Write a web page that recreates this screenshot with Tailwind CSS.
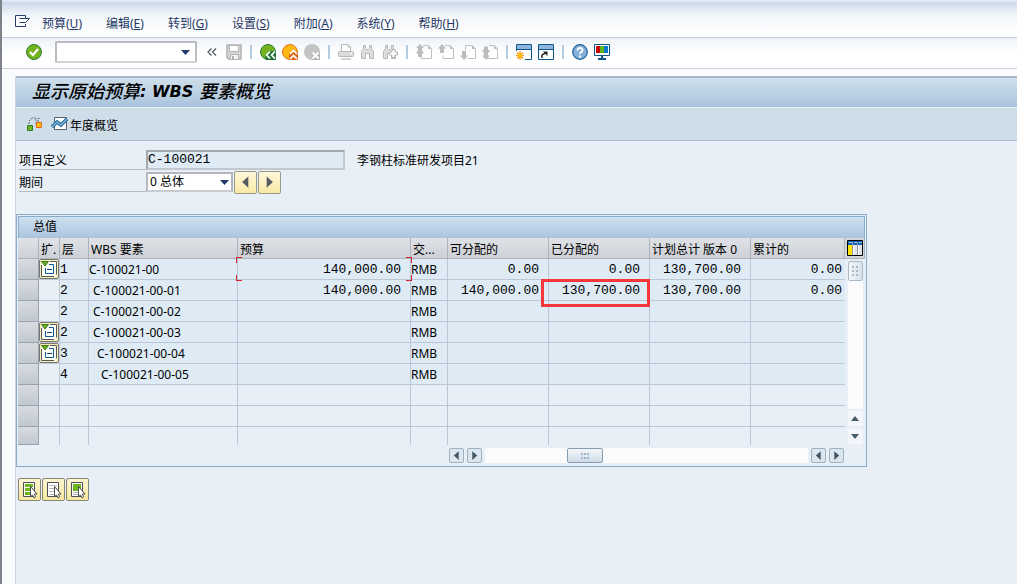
<!DOCTYPE html>
<html lang="zh-CN">
<head>
<meta charset="utf-8">
<meta name="viewport" content="width=device-width, initial-scale=1">
<title>显示原始预算: WBS 要素概览</title>
<script src="https://cdn.jsdelivr.net/npm/@tailwindcss/browser@4"></script>
</head>
<body class="min-h-screen flex flex-col bg-[#fafbfd] border-l-2 border-[#7d828b] font-['Noto_Sans','Noto_Sans_CJK_SC',sans-serif] text-xs text-black">

<svg width="0" height="0" class="absolute" aria-hidden="true">
  <defs>
    <symbol id="page" viewBox="0 0 16 16"><path d="M7 1.500h5l3.500 3.500v9.500H5V11" fill="none" stroke="#c0c0c0"/><path d="M12 1v4h4z" fill="#c0c0c0"/></symbol>
    <symbol id="tree" viewBox="0 0 18 18"><path d="M1.500 1.500h15v15h-15z" fill="#fffdf2"/><path d="M10 1.500h6.500v13M1.500 5v11.500H14" fill="none" stroke="#55585c"/><path d="M9 4.500h4.500v9h-8V8" fill="#fff" stroke="#0a5d94"/><path d="M7 9.500h5" stroke="#0a3d78"/><path d="M1.500 1.500h7L5 6z" fill="#6cae1e" stroke="#37751f"/></symbol>
    <symbol id="cursor" viewBox="0 0 18 18"><path d="M9.500 5.500v10l2-1.500 1.500 3 1.500-1-1-3h2.500z" fill="#fff" stroke="#4c5156"/></symbol>
    <symbol id="left" viewBox="0 0 8 10"><path d="M6.500 0v10L1 5z" fill="currentColor"/></symbol>
    <symbol id="right" viewBox="0 0 8 10"><path d="M1.500 0v10L7 5z" fill="currentColor"/></symbol>
    <symbol id="bino" viewBox="0 0 16 16"><path d="M3.500 1.500h2v3l1 1h2l1-1v-3h2v3l2 3v7h-4v-5h-4v5h-4v-7l2-3z" fill="#dedede" stroke="#b5b5b5"/></symbol>
  </defs>
</svg>

<header>
  <nav aria-label="菜单" class="h-[38px] pt-2 pl-[13px] flex items-center border-t-2 border-[#dfe8f5] border-b border-b-[#c9cdd6] bg-linear-to-b from-[#ccd8e9] via-[#f4f7fb] via-40% to-white text-[#1f3763]">
    <button aria-label="系统菜单" class="mr-3 mb-1.5"><svg width="15" height="12" viewBox="0 0 15 12" fill="none" stroke="#27406b"><path d="M10.500 3V.5H.5v11h10V9"/><path d="M4.500 3.500h10l-4 4h-6" fill="#fff"/></svg></button>
    <ul class="flex gap-6">
      <li><button>预算(<u>U</u>)</button></li>
      <li><button>编辑(<u>E</u>)</button></li>
      <li><button>转到(<u>G</u>)</button></li>
      <li><button>设置(<u>S</u>)</button></li>
      <li><button>附加(<u>A</u>)</button></li>
      <li><button>系统(<u>Y</u>)</button></li>
      <li><button>帮助(<u>H</u>)</button></li>
    </ul>
  </nav>

  <div role="toolbar" aria-label="标准工具栏" class="h-[31px] pl-6 pb-0.5 flex items-center gap-1.5 border-b border-[#cdd2df] bg-linear-to-b from-[#eef2f8] to-white to-50%">
    <button aria-label="输入"><svg width="16" height="16" viewBox="0 0 16 16"><circle cx="8" cy="8" r="7.500" fill="#72b31e" stroke="#2f7d38"/><path d="M4 8l3 3 5-6" fill="none" stroke="#fff" stroke-width="2.200"/></svg></button>
    <div class="ml-[7px] flex w-[142px] h-[22px] border-2 border-[#b9bcc1] border-b-[#cfd2d6] rounded-xs bg-white">
      <input aria-label="命令" class="min-w-0 flex-1 px-1 outline-none">
      <button aria-label="命令历史" class="w-5 flex items-center justify-center"><svg width="9" height="5" viewBox="0 0 9 5"><path d="M0 0h9L4.500 5z" fill="#213a6a"/></svg></button>
    </div>
    <button aria-label="收起" class="ml-1 mr-[3px]"><svg width="10" height="10" viewBox="0 0 10 10" fill="none" stroke="#555a60" stroke-width="1.300"><path d="M4.500 1.500L1 5l3.500 3.500M9 1.500L5.500 5 9 8.500"/></svg></button>
    <button aria-label="保存"><svg width="16" height="16" viewBox="0 0 16 16"><path d="M1 1h14v14H2.500L1 13.500z" fill="#d6d6d6" stroke="#b3b3b3" stroke-width="1.500"/><path d="M3.500 1.500h9v6h-9z" fill="#fff" stroke="#b3b3b3"/><path d="M4.500 10.500h8v5h-8z" fill="#f5f5f5" stroke="#b3b3b3"/><path d="M6 12h2v3H6z" fill="#b3b3b3"/></svg></button>
    <span class="w-0.5 h-3.5 mx-0.5 bg-[#b4cce2]"></span>
    <button aria-label="返回"><svg width="16" height="16" viewBox="0 0 16 16"><circle cx="8" cy="8" r="7.500" fill="#72b31e" stroke="#2f7d38"/><path d="M6 16l-1-4.500L9 7h7v9z" fill="#26743b"/><path d="M10 7.500L6.500 11l3.500 3.500M15 7.500L11.500 11l3.500 3.500" fill="none" stroke="#fff" stroke-width="1.700"/></svg></button>
    <button aria-label="退出"><svg width="16" height="16" viewBox="0 0 16 16"><circle cx="8" cy="8" r="7.500" fill="#fdb813" stroke="#e07020"/><path d="M7 16v-6l4.500-5L16 9v7z" fill="#e0661c"/><path d="M8 10l3.500-3.500L15 10M8 15l3.500-3.500L15 15" fill="none" stroke="#fff" stroke-width="1.700"/></svg></button>
    <button aria-label="取消"><svg width="16" height="16" viewBox="0 0 16 16"><circle cx="8" cy="8" r="8" fill="#c4c4c4"/><path d="M8 8h8v8H8z" fill="#b6b6b6"/><path d="M8.500 8.500l6 6m0-6l-6 6" stroke="#fff" stroke-width="2"/></svg></button>
    <span class="w-0.5 h-3.5 mx-0.5 bg-[#b4cce2]"></span>
    <button aria-label="打印"><svg width="16" height="16" viewBox="0 0 16 16"><path d="M3.500 7V.5H10l2.500 2.500v4" fill="#fff" stroke="#b8b8b8"/><path d="M10 .5V3h2.500" fill="none" stroke="#b8b8b8"/><rect x=".5" y="7.500" width="15" height="5" rx="1" fill="#dcdcdc" stroke="#b8b8b8"/><path d="M3 15h10" stroke="#c4c4c4" stroke-width="1.500"/><path d="M12 9.500h2" stroke="#fff"/></svg></button>
    <button aria-label="查找"><svg width="16" height="16"><use href="#bino"/></svg></button>
    <button aria-label="查找下一个"><svg width="16" height="16" viewBox="0 0 16 16"><use href="#bino" width="16" height="16"/><path d="M10 5.500h3V8h2.500v3H13v2.500h-3V11H7.500V8H10z" fill="#fff" stroke="#b5b5b5"/></svg></button>
    <span class="w-0.5 h-3.5 mx-0.5 bg-[#b4cce2]"></span>
    <button aria-label="第一页"><svg width="16" height="16" viewBox="0 0 16 16" fill="#bdbdbd"><use href="#page" width="16" height="16"/><path d="M4 0l4 4H6v2l2 3.500H6V13H2V9.500H0L2 6V4H0z"/></svg></button>
    <button aria-label="上一页"><svg width="16" height="16" viewBox="0 0 16 16" fill="#bdbdbd"><use href="#page" width="16" height="16"/><path d="M4 0l4 4.500H6V9H2V4.500H0z"/></svg></button>
    <button aria-label="下一页"><svg width="16" height="16" viewBox="0 0 16 16" fill="#bdbdbd"><path d="M5.500 6V1.500H12l3.500 3.500v9.500H8" fill="none" stroke="#c0c0c0"/><path d="M12 1v4h4zM4 16l4-4.500H6V7H2v4.500H0z"/></svg></button>
    <button aria-label="最后一页"><svg width="16" height="16" viewBox="0 0 16 16" fill="#bdbdbd"><use href="#page" width="16" height="16"/><path d="M4 16l4-4.500H6V9.500L8 6H6V2.500H2V6H0l2 3.500v2H0z"/></svg></button>
    <span class="w-0.5 h-3.5 mx-0.5 bg-[#b4cce2]"></span>
    <button aria-label="新建会话"><svg width="16" height="16" viewBox="0 0 16 16"><path d="M.5 7V.5h15v15H9" fill="#fff" stroke="#0c568c"/><path d="M1 1h14v4H1z" fill="#8fb5dc"/><path d="M0 5.500h16" stroke="#0c568c"/><path d="M4 7v9M0 11.500h8M1 8.500l6 6m0-6l-6 6" stroke="#f08a14" stroke-width="1.200"/><circle cx="4" cy="11.500" r="2.500" fill="#fdc010"/></svg></button>
    <button aria-label="创建快捷方式"><svg width="16" height="16" viewBox="0 0 16 16"><path d="M.5.5h15v15H.5z" fill="#fff" stroke="#0c568c"/><path d="M1 1h14v4H1z" fill="#8fb5dc"/><path d="M0 5.500h16" stroke="#0c568c"/><path d="M4 14c-.5-3 0-4 3-4.500" fill="none" stroke="#222" stroke-width="1.500"/><path d="M5 7.500h4.500V12z" fill="#222"/></svg></button>
    <span class="w-0.5 h-3.5 mx-0.5 bg-[#b4cce2]"></span>
    <button aria-label="帮助"><svg width="16" height="16" viewBox="0 0 16 16"><circle cx="8" cy="8" r="7.300" fill="#86b0d8" stroke="#1c669c" stroke-width="1.200"/><path d="M5.500 6.500c0-3.500 5-3.200 5-.5 0 2-2.500 2-2.500 4" fill="none" stroke="#fff" stroke-width="1.800"/><path d="M7 11.500h2v2H7z" fill="#fff"/></svg></button>
    <button aria-label="本地布局"><svg width="16" height="16" viewBox="0 0 16 16"><path d="M.5.5h15v11H.5z" fill="#fff" stroke="#0c568c"/><path d="M2 2h4v7H2z" fill="#c40808"/><path d="M6 2h4v7H6z" fill="#5cb31e"/><path d="M10 2h4v7h-4z" fill="#0878c8"/><path d="M8 12v3M4 15h8" stroke="#0c568c" stroke-width="2"/></svg></button>
  </div>
</header>

<main class="mt-[7px] ml-[13px] flex-1 flex flex-col bg-[#e8eff6] border-l border-[#cfd9e6]">
  <h1 class="h-8 pl-4 pb-0.5 border-t-2 border-[#a9b5c9] border-b border-b-[#e6eef6] bg-linear-to-b from-[#cfdfeb] to-[#a9c3dc] flex items-center text-base font-medium italic font-['DejaVu_Sans','Noto_Sans_CJK_SC',sans-serif]"><span class="text-lg">显示原始预算</span><b>:&nbsp;WBS&nbsp;</b><span class="text-lg">要素概览</span></h1>

  <div role="toolbar" aria-label="应用工具栏" class="h-[33px] pl-2.5 flex items-center gap-2 bg-[#cfdde8] border-b border-[#a8bdd0]">
    <button aria-label="层次结构"><svg width="17" height="16" viewBox="0 0 17 16"><path d="M3 8V5l3-3h4v6M12 6V2.500h2" fill="none" stroke="#62676c" stroke-dasharray="2 1"/><path d="M1.500 9.500h5v5h-5z" fill="#72b31e" stroke="#2f7d38"/><path d="M10.500 6.500h5v5h-5z" fill="#fdb813" stroke="#e0661c"/></svg></button>
    <button class="flex items-center gap-0.5"><svg width="17" height="14" viewBox="0 0 17 14"><path d="M3.500.5h12v12h-12z" fill="#fff" stroke="#5b6167"/><path d="M1 10l5-5 4 3 6-6" fill="none" stroke="#1b6598" stroke-width="3.500"/><path d="M1 10l5-5 4 3 6-6" fill="none" stroke="#7db4dc" stroke-width="1.500"/></svg><span class="pt-1">年度概览</span></button>
  </div>

  <form class="pt-2 pl-[3px] flex flex-col gap-px">
    <div class="flex items-center h-[21px]">
      <label for="project" class="w-[127px] h-5 pt-[3px] leading-4 border-b border-[#b8bcc2]">项目定义</label>
      <input id="project" readonly value="C-100021" class="w-[199px] h-5 border-2 border-[#a5a9af] border-b-[#c3c8ce] border-r-[#c3c8ce] bg-[#deebf5] font-['Liberation_Mono',monospace] text-[13px] outline-none">
      <span class="ml-3 pt-0.5">李钢柱标准研发项目21</span>
    </div>
    <div class="flex items-center h-[22px]">
      <label for="period" class="w-[127px] h-5 pt-[3px] leading-4 border-b border-[#b8bcc2]">期间</label>
      <div class="relative">
        <select id="period" class="appearance-none block w-[87px] h-5 pl-0.5 border-2 border-[#b4b8be] border-b-[#c9ccd0] bg-white outline-none"><option>0 总体</option></select>
        <svg class="absolute right-1 top-2 pointer-events-none" width="9" height="5" viewBox="0 0 9 5"><path d="M0 0h9L4.500 5z" fill="#213a6a"/></svg>
      </div>
      <button type="button" aria-label="上一期间" class="ml-px size-[23px] flex items-center justify-center rounded-xs border border-[#9a9a8c] bg-linear-to-b from-[#fef8dc] to-[#f9e9a4] text-[#555b60]"><svg width="9" height="12"><use href="#left"/></svg></button>
      <button type="button" aria-label="下一期间" class="ml-px size-[23px] flex items-center justify-center rounded-xs border border-[#9a9a8c] bg-linear-to-b from-[#fef8dc] to-[#f9e9a4] text-[#555b60]"><svg width="9" height="12"><use href="#right"/></svg></button>
    </div>
  </form>

  <section aria-labelledby="totals" class="mt-[21px] w-[851px] max-w-full border border-[#8aaccc] p-px pb-0.5">
    <h2 id="totals" class="h-[22px] pl-3.5 pt-0.5 border border-b-0 border-[#8aaccc] bg-linear-to-b from-[#cfe0ee] to-[#aac4de]">总值</h2>
    <div class="flex">
      <table class="table-fixed w-[827px] border-separate border-spacing-0 [&_td]:h-[21px] [&_td]:p-0 [&_td]:border-r [&_td]:border-b [&_td]:border-[#bcc6d6] [&_td]:pt-0.5 [&_td]:leading-4 [&_td:nth-child(2)]:pt-0 [&_td]:whitespace-nowrap [&_td:last-child]:border-r-0 [&_tr:last-child>td]:border-b-0 [&_tr:last-child>td]:h-[18px] [&_th]:h-[21px] [&_th]:p-0 [&_th]:pl-0.5 [&_th]:pt-[3px] [&_th]:font-normal [&_th]:text-left [&_th]:leading-4 [&_th]:whitespace-nowrap [&_th]:border-r [&_th]:border-[#aeb3bb] [&_th]:border-b [&_th]:bg-linear-to-b [&_th]:from-[#dfe2e6] [&_th]:to-[#cdd1d7] [&_td:first-child]:bg-linear-to-b [&_td:first-child]:from-[#d8dce1] [&_td:first-child]:to-[#c2c8d0] [&_td:first-child]:border-[#9aa2b0] [&_tr:last-child>td:first-child]:border-b [&_td:nth-child(3)]:font-['Liberation_Mono',monospace] [&_td:nth-child(3)]:text-[13px] [&_td:nth-child(5)]:pr-[9px] [&_td:nth-child(n+7)]:pr-[9px] [&_td:last-child]:pr-[3px]! [&_td:nth-child(n+7)]:text-right [&_td:nth-child(5)]:text-right [&_td:nth-child(n+7)]:font-['Liberation_Mono',monospace] [&_td:nth-child(5)]:font-['Liberation_Mono',monospace] [&_td:nth-child(n+7)]:text-[13px] [&_td:nth-child(5)]:text-[13px]">
        <colgroup><col class="w-[21px]"><col class="w-[21px]"><col class="w-[29px]"><col class="w-[149px]"><col class="w-[173px]"><col class="w-[37px]"><col class="w-[101px]"><col class="w-[101px]"><col class="w-[101px]"><col></colgroup>
        <thead><tr><th></th><th>扩.</th><th>层</th><th>WBS 要素</th><th>预算</th><th>交...</th><th>可分配的</th><th>已分配的</th><th>计划总计 版本 0</th><th>累计的</th></tr></thead>
        <tbody>
          <tr class="[&>td:nth-child(n+3)]:bg-[#deebf5]"><td></td><td><button aria-label="收起" class="block size-5 border border-[#77776e] rounded-xs bg-[#f8eeb8]"><svg width="18" height="18"><use href="#tree"/></svg></button></td><td>1</td><td>C-100021-00</td><td class="relative">140,000.00
            <span class="absolute -left-0.5 -top-0.5 size-1.5 border-l border-t border-[#d8202c]"></span><span class="absolute -left-0.5 -bottom-0.5 size-1.5 border-l border-b border-[#d8202c]"></span><span class="absolute -right-0.5 -top-0.5 size-1.5 border-r border-t border-[#d8202c]"></span><span class="absolute -right-0.5 -bottom-0.5 size-1.5 border-r border-b border-[#d8202c]"></span></td><td>RMB</td><td>0.00</td><td>0.00</td><td>130,700.00</td><td>0.00</td></tr>
          <tr class="[&>td:nth-child(n+3)]:bg-[#deebf5]"><td></td><td></td><td>2</td><td class="pl-1!">C-100021-00-01</td><td>140,000.00</td><td>RMB</td><td>140,000.00</td><td class="relative">130,700.00<span class="absolute -left-2 -right-px -top-px -bottom-[7px] z-10 border-3 border-[#f5363b]"></span></td><td>130,700.00</td><td>0.00</td></tr>
          <tr class="[&>td:nth-child(n+3)]:bg-[#deebf5]"><td></td><td></td><td>2</td><td class="pl-1!">C-100021-00-02</td><td></td><td>RMB</td><td></td><td></td><td></td><td></td></tr>
          <tr class="[&>td:nth-child(n+3)]:bg-[#deebf5]"><td></td><td><button aria-label="收起" class="block size-5 border border-[#77776e] rounded-xs bg-[#f8eeb8]"><svg width="18" height="18"><use href="#tree"/></svg></button></td><td>2</td><td class="pl-1!">C-100021-00-03</td><td></td><td>RMB</td><td></td><td></td><td></td><td></td></tr>
          <tr class="[&>td:nth-child(n+3)]:bg-[#deebf5]"><td></td><td><button aria-label="收起" class="block size-5 border border-[#77776e] rounded-xs bg-[#f8eeb8]"><svg width="18" height="18"><use href="#tree"/></svg></button></td><td>3</td><td class="pl-2!">C-100021-00-04</td><td></td><td>RMB</td><td></td><td></td><td></td><td></td></tr>
          <tr class="[&>td:nth-child(n+3)]:bg-[#deebf5]"><td></td><td></td><td>4</td><td class="pl-3!">C-100021-00-05</td><td></td><td>RMB</td><td></td><td></td><td></td><td></td></tr>
          <tr><td></td><td></td><td></td><td></td><td></td><td></td><td></td><td></td><td></td><td></td></tr>
          <tr><td></td><td></td><td></td><td></td><td></td><td></td><td></td><td></td><td></td><td></td></tr>
          <tr><td></td><td></td><td></td><td></td><td></td><td></td><td></td><td></td><td></td><td></td></tr>
        </tbody>
      </table>
      <div class="flex-1 flex flex-col items-center">
        <button aria-label="表设置" class="w-full h-[21px] flex items-center justify-center bg-[#d3d7dc] border-b border-r border-[#a9b0ba]"><svg width="16" height="16" viewBox="0 0 16 16"><path d="M.5.5h15v15H.5z" fill="#fff" stroke="#000"/><path d="M1 1h14v4H1z" fill="#1a62b8"/><path d="M1 5h4v10H1z" fill="#ffe600"/><path d="M7 5h3v10H7zM12 5h3v10h-3z" fill="#e1e3e6"/><path d="M5.500 2v13M10.500 2v13" stroke="#8f969d"/><path d="M2 2.500h3m2 0h3m2 0h3" stroke="#8cc0f0"/></svg></button>
        <div class="flex-1 w-[15px] mt-0.5 bg-[#fbfbfc]"><button aria-label="滚动块" class="w-full h-5 flex items-center justify-center rounded-xs border border-[#a9b9c7] bg-linear-to-r from-[#f3f7fa] to-[#d6e2ec]"><svg width="7" height="10" viewBox="0 0 7 10" stroke="#a9b9c6" stroke-dasharray="2 2"><path d="M1 0v10M5 0v10" stroke-width="2"/></svg></button></div>
        <button aria-label="向上" class="mt-0.5 w-[15px] h-[15px] flex items-center justify-center bg-[#f3f6fa]"><svg width="8" height="5" viewBox="0 0 8 5"><path d="M0 5h8L4 0z" fill="#465c6c"/></svg></button>
        <button aria-label="向下" class="mt-[3px] mb-px w-[15px] h-[15px] flex items-center justify-center bg-[#f3f6fa]"><svg width="8" height="5" viewBox="0 0 8 5"><path d="M0 0h8L4 5z" fill="#465c6c"/></svg></button>
      </div>
    </div>
    <div class="mt-[3px] mb-px pl-[431px] pr-[21px] flex items-center gap-[3px] text-[#3f5666]">
      <button aria-label="向左" class="size-[15px] flex items-center justify-center border border-[#9fb0be] rounded-xs bg-[#dbe6ee]"><svg width="7" height="9"><use href="#left"/></svg></button>
      <button aria-label="向右" class="size-[15px] flex items-center justify-center border border-[#9fb0be] rounded-xs bg-[#dbe6ee]"><svg width="7" height="9"><use href="#right"/></svg></button>
      <div class="flex-1 h-[15px] pl-[82px] bg-[#fbfbfc]"><button aria-label="水平滚动块" class="w-9 h-[15px] flex items-center justify-center rounded-xs border border-[#849db0] bg-linear-to-b from-[#f5f8fb] to-[#cddbe6]"><svg width="8" height="6" viewBox="0 0 8 6" stroke="#a3b5c3" stroke-dasharray="2 1" stroke-width="2"><path d="M0 1h8M0 5h8"/></svg></button></div>
      <button aria-label="向左" class="size-[15px] flex items-center justify-center border border-[#9fb0be] rounded-xs bg-[#dbe6ee]"><svg width="7" height="9"><use href="#left"/></svg></button>
      <button aria-label="向右" class="size-[15px] flex items-center justify-center border border-[#9fb0be] rounded-xs bg-[#dbe6ee]"><svg width="7" height="9"><use href="#right"/></svg></button>
    </div>
  </section>

  <div class="mt-[11px] ml-0.5 flex gap-px">
    <button aria-label="全选" class="size-[23px] flex items-center justify-center rounded-xs border border-[#85857a] bg-linear-to-b from-[#fdf6d4] to-[#f8e79c]"><svg width="18" height="18" viewBox="0 0 18 18"><path d="M2.500 1.500h11v14h-11z" fill="#fff" stroke="#4c5156"/><path d="M4 4.500h8M4 8.500h8M4 12.500h8" stroke="#6cb61c" stroke-width="3"/><use href="#cursor" width="18" height="18"/></svg></button>
    <button aria-label="取消全选" class="size-[23px] flex items-center justify-center rounded-xs border border-[#85857a] bg-linear-to-b from-[#fdf6d4] to-[#f8e79c]"><svg width="18" height="18" viewBox="0 0 18 18"><path d="M2.500 1.500h11v14h-11z" fill="#fff" stroke="#4c5156"/><path d="M4 4.500h8M4 7.500h8M4 10.500h8M4 13.500h8" stroke="#b9bcbf"/><use href="#cursor" width="18" height="18"/></svg></button>
    <button aria-label="选择块" class="size-[23px] flex items-center justify-center rounded-xs border border-[#85857a] bg-linear-to-b from-[#fdf6d4] to-[#f8e79c]"><svg width="18" height="18" viewBox="0 0 18 18"><path d="M2.500 1.500h11v14h-11z" fill="#fff" stroke="#4c5156"/><path d="M4 3h8v7H4z" fill="#6cb61c"/><path d="M4 11.500h8M4 13.500h8" stroke="#b9bcbf"/><use href="#cursor" width="18" height="18"/></svg></button>
  </div>
</main>
</body>
</html>
